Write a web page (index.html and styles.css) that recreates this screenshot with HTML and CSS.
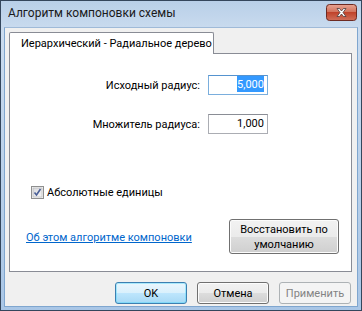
FILE: index.html
```html
<!DOCTYPE html>
<html lang="ru">
<head>
    <meta charset="UTF-8">
    <title>Алгоритм компоновки схемы</title>
    <link rel="stylesheet" href="styles.css">
</head>
<body>
    <div class="window">
        <div class="titlebar">
            <span class="title">Алгоритм компоновки схемы</span>
            <svg class="close" width="31" height="17" viewBox="0 0 31 17">
                <defs>
                    <linearGradient id="closeBg" x1="0" y1="0" x2="0" y2="1">
                        <stop offset="0" stop-color="#e8a493"/>
                        <stop offset="0.45" stop-color="#d2755f"/>
                        <stop offset="0.5" stop-color="#c0432b"/>
                        <stop offset="1" stop-color="#d0705a"/>
                    </linearGradient>
                </defs>
                <rect x="0.5" y="0.5" width="30" height="16" rx="3" fill="url(#closeBg)" stroke="#6d2a22"/>
                <path d="M11 4.5 L13.5 4.5 L15.5 7 L17.5 4.5 L20 4.5 L17 8.5 L20 12.5 L17.5 12.5 L15.5 10 L13.5 12.5 L11 12.5 L14 8.5 Z" fill="#ffffff" stroke="#4a3a3a" stroke-width="0.8" stroke-linejoin="round"/>
            </svg>
        </div>
        <div class="client">
            <div class="tabs">
                <div class="tab">Иерархический - Радиальное дерево</div>
            </div>
            <div class="panel">
                <div class="form">
                    <label class="form-label">Исходный радиус:</label>
                    <div class="field focused"><span class="selected">5,000</span></div>
                    <label class="form-label">Множитель радиуса:</label>
                    <div class="field">1,000</div>
                </div>
                <div class="check-row">
                    <svg class="checkbox" width="13" height="13" viewBox="0 0 13 13">
                        <defs>
                            <linearGradient id="boxBg" x1="0" y1="0" x2="1" y2="1">
                                <stop offset="0" stop-color="#d8d9dc"/>
                                <stop offset="1" stop-color="#f6f6f6"/>
                            </linearGradient>
                        </defs>
                        <rect x="0.5" y="0.5" width="12" height="12" fill="#f4f4f4" stroke="#8e8f8f"/>
                        <rect x="2" y="2" width="9" height="9" fill="url(#boxBg)" stroke="#aeb0b3" stroke-width="0.6"/>
                        <path d="M3.5 6.5 L5.5 9 L9.5 3" fill="none" stroke="#4a5f97" stroke-width="1.6"/>
                    </svg>
                    <span>Абсолютные единицы</span>
                </div>
                <div class="bottom-row">
                    <a class="link" href="#">Об этом алгоритме компоновки</a>
                    <button class="btn restore">Восстановить по умолчанию</button>
                </div>
            </div>
            <div class="footer">
                <button class="btn default">OK</button>
                <button class="btn">Отмена</button>
                <button class="btn" disabled>Применить</button>
            </div>
        </div>
    </div>
</body>
</html>
```
FILE: styles.css
```css
body {
    margin: 0;
    font-family: Roboto, 'Noto Sans', sans-serif;
    font-size: 11px;
    color: #000;
}
.window {
    width: 362px;
    height: 311px;
    box-sizing: border-box;
    border: 1px solid #34465c;
    background: linear-gradient(#b8cfe8, #cbdcef 30px, #a9c6e6);
    display: flex;
    flex-direction: column;
    padding: 0 3px 3px;
}
.titlebar {
    height: 26px;
    display: flex;
    align-items: center;
    justify-content: space-between;
    padding: 0 1px 0 4px;
}
.title {
    color: #1a1a1a;
    font-size: 12px;
    margin-top: -2px;
}
.close { margin-top: -4px; }
.client {
    flex: 1;
    background: #f0f0f0;
    border: 1px solid #7fa6cf;
    border-top-color: #9fbad8;
    padding: 4px 5px 0 4px;
    display: flex;
    flex-direction: column;
}
.tabs { display: flex; }
.tab {
    height: 21px;
    line-height: 22px;
    padding: 0 4px 0 11px;
    width: 188px;
    white-space: nowrap;
    background: #fff;
    border: 1px solid #898c95;
    border-bottom: none;
    position: relative;
    margin-bottom: -1px;
    z-index: 1;
    border-radius: 2px 2px 0 0;
}
.panel {
    height: 217px;
    background: #fff;
    border: 1px solid #898c95;
    display: flex;
    flex-direction: column;
}
.form {
    display: grid;
    grid-template-columns: 190px 60px;
    column-gap: 8px;
    row-gap: 19px;
    align-items: center;
    padding-top: 21px;
}
.form-label { text-align: right; }
.field {
    height: 18px;
    line-height: 18px;
    border: 1px solid #abadb3;
    border-top-color: #8a8d95;
    text-align: right;
    padding: 0 3px;
    box-sizing: content-box;
    width: 52px;
}
.field.focused {
    border-color: #7aaedd;
    border-top-color: #5593cf;
}
.selected {
    background: #3399ff;
    color: #fff;
    padding: 2px 0 1px;
}
.check-row {
    display: flex;
    align-items: center;
    gap: 3px;
    margin-top: 52px;
    padding-left: 21px;
}
.bottom-row {
    display: flex;
    align-items: center;
    justify-content: space-between;
    margin-top: 20px;
    padding: 0 12px 0 16px;
}
.link {
    color: #0066cc;
    text-decoration: underline;
    margin-top: 2px;
}
.btn {
    font-family: inherit;
    font-size: 11px;
    color: #000;
    height: 22px;
    width: 72px;
    padding: 0;
    border: 1px solid #707070;
    border-radius: 3px;
    background: linear-gradient(#f2f2f2, #ebebeb 50%, #dddddd 50%, #cfcfcf);
    box-shadow: inset 0 0 0 1px #fcfcfc;
}
.btn.restore {
    width: 110px;
    height: 35px;
    line-height: 15px;
    padding: 0 10px;
}
.btn.default {
    border-color: #3c7fb1;
    background: linear-gradient(#eaf6fd, #d9f0fc 50%, #bee6fd 50%, #a7d9f5);
    box-shadow: inset 0 0 0 1px #48d8fb66;
}
.btn:disabled {
    border-color: #adb2b5;
    background: #f4f4f4;
    color: #838383;
    box-shadow: none;
}
.footer {
    display: flex;
    justify-content: flex-end;
    gap: 10px;
    margin-top: 10px;
    padding-right: 1px;
}
```
